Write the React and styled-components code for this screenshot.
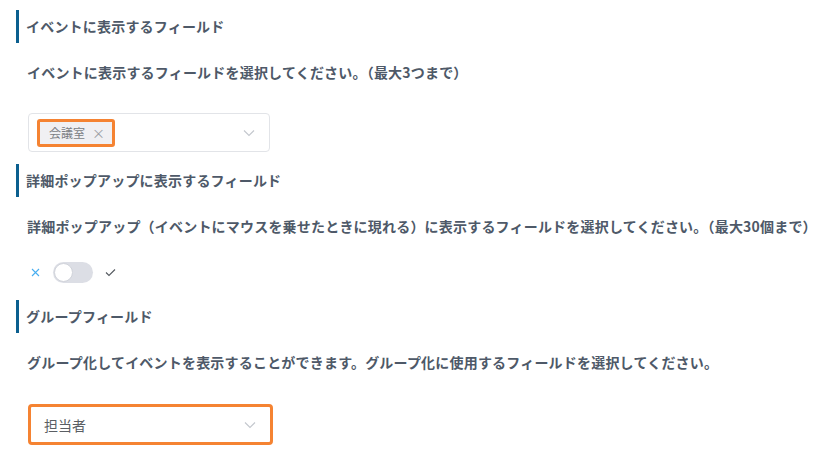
import React, { useState } from 'react';
import styled, { createGlobalStyle } from 'styled-components';

const GlobalStyle = createGlobalStyle`
  body {
    margin: 0;
    background: #fff;
    font-family: "Noto Sans CJK JP", "Noto Sans", sans-serif;
  }
`;

const Page = styled.div`
  padding: 10px 16px 0;
`;

const Section = styled.section`
  margin-bottom: ${props => props.gap || 12}px;
`;

const Heading = styled.h3`
  margin: 0;
  height: 33px;
  line-height: 33px;
  border-left: 3px solid #0b5f8f;
  padding-left: 7px;
  font-size: 14px;
  font-weight: bold;
  letter-spacing: 0.2px;
  color: #4e5968;
`;

const Desc = styled.p`
  margin: 19px 0 0 11px;
  line-height: 20px;
  font-size: 14px;
  font-weight: bold;
  letter-spacing: 0.2px;
  white-space: nowrap;
  color: #4e5968;
`;

const SelectBox = styled.div`
  margin: ${props => props.top || 31}px 0 0 12px;
  box-sizing: border-box;
  width: ${props => props.w || 242}px;
  height: ${props => props.h || 39}px;
  display: flex;
  align-items: center;
  justify-content: space-between;
  padding: 0 14px 0 ${props => props.pl || 8}px;
  border: ${props => props.focus ? '3px solid #f58332' : '1px solid #e2e4e8'};
  border-radius: 4px;
  background: #fff;
`;

const Tag = styled.span`
  box-sizing: border-box;
  height: 28px;
  display: inline-flex;
  align-items: center;
  gap: 7px;
  padding: 0 7px 0 9px;
  border: 3px solid #f58332;
  border-radius: 3px;
  background: #f0f0f3;
  font-size: 12px;
  color: #7b7e84;
`;

const TagClose = styled.span`
  font-size: 13px;
  color: #9a9da3;
`;

const Value = styled.span`
  font-size: 14px;
  color: #5a5e63;
`;

const Chevron = () => (
  <svg width="12" height="8" viewBox="0 0 12 8">
    <path d="M1 1.5l5 5 5-5" fill="none" stroke="#c3c7cd" strokeWidth="1.1" />
  </svg>
);

const ToggleRow = styled.div`
  margin: 21px 0 0 15px;
  height: 30px;
  display: flex;
  align-items: center;
`;

const Mark = styled.span`
  display: inline-flex;
  color: ${props => props.color};
`;

const Track = styled.button`
  position: relative;
  width: 40px;
  height: 21px;
  margin: 0 12px 0 13px;
  padding: 0;
  border: none;
  border-radius: 11px;
  background: ${props => props.on ? '#3da5e4' : '#dcdee5'};
  cursor: pointer;
`;

const Knob = styled.span`
  position: absolute;
  top: 1px;
  left: ${props => props.on ? '20px' : '1px'};
  width: 19px;
  height: 19px;
  box-sizing: border-box;
  border-radius: 50%;
  background: #fff;
  border: 1px solid #d0d3da;
`;

function App() {
  const [popup, setPopup] = useState(false);

  return (
    <Page>
      <GlobalStyle />
      <Section>
        <Heading>イベントに表示するフィールド</Heading>
        <Desc>イベントに表示するフィールドを選択してください。（最大3つまで）</Desc>
        <SelectBox>
          <Tag>
            会議室
            <TagClose>×</TagClose>
          </Tag>
          <Chevron />
        </SelectBox>
      </Section>

      <Section gap={13}>
        <Heading>詳細ポップアップに表示するフィールド</Heading>
        <Desc>詳細ポップアップ（イベントにマウスを乗せたときに現れる）に表示するフィールドを選択してください。（最大30個まで）</Desc>
        <ToggleRow>
          <Mark color="#48aef0">
            <svg width="9" height="9" viewBox="0 0 9 9">
              <path d="M1 1l7 7M8 1l-7 7" stroke="currentColor" strokeWidth="1.1" />
            </svg>
          </Mark>
          <Track on={popup} onClick={() => setPopup(!popup)}>
            <Knob on={popup} />
          </Track>
          <Mark color="#555a60">
            <svg width="11" height="9" viewBox="0 0 11 9">
              <path d="M1 4.5l3 3L10 1.5" fill="none" stroke="currentColor" strokeWidth="1.1" />
            </svg>
          </Mark>
        </ToggleRow>
      </Section>

      <Section>
        <Heading>グループフィールド</Heading>
        <Desc>グループ化してイベントを表示することができます。グループ化に使用するフィールドを選択してください。</Desc>
        <SelectBox focus w={245} h={41} pl={13} top={32}>
          <Value>担当者</Value>
          <Chevron />
        </SelectBox>
      </Section>
    </Page>
  );
}

export default App;
